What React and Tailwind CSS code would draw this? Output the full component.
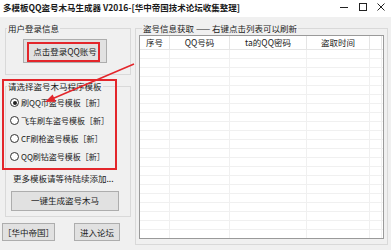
export default function App() {
  const rowLines = Array.from({ length: 21 });
  const cols = [30, 60, 77, 63, 12];
  return (
    <div className="w-[391px] h-[250px] bg-[#f0f0f0] overflow-hidden relative text-[#1a1a1a] font-['Noto_Sans_CJK_SC','Noto_Sans',sans-serif]">
      {/* title bar */}
      <div className="h-[17px] bg-white flex items-start">
        <div className="pl-[3px] pt-[2px] text-[8.5px] leading-[11px] font-bold whitespace-nowrap">
          多模板QQ盗号木马生成器 V2016-[华中帝国技术论坛收集整理]
        </div>
        <div className="ml-auto flex items-start pt-[3px]">
          <div className="w-[8px] h-[8px] flex items-center mr-[11px]"><div className="w-[8px] h-px bg-[#222]" /></div>
          <div className="w-[8px] h-[8px] border border-[#222] mr-[10px]" />
          <svg width="8" height="8" viewBox="0 0 8 8" className="mr-[6px]"><path d="M0.5 0.5L7.5 7.5M7.5 0.5L0.5 7.5" stroke="#222" strokeWidth="1" /></svg>
        </div>
      </div>

      <div className="flex">
        {/* left column */}
        <div className="w-[135px] flex flex-col">
          <fieldset className="ml-[5px] mt-[6px] w-[126px] h-[52px] border border-[#d9d9d9] flex justify-center">
            <legend className="ml-[1px] px-[1px] text-[8.5px] leading-[10px]">用户登录信息</legend>
            <button className="mt-[6px] ml-[-6px] w-[84px] h-[24px] bg-[#e1e1e1] border border-[#adadad] text-[8.5px] leading-none">点击登录QQ账号</button>
          </fieldset>
          <fieldset className="ml-[5px] mt-[6px] w-[126px] h-[136px] border border-[#d9d9d9] flex flex-col">
            <legend className="ml-[1px] px-[1px] text-[8.5px] leading-[10px]">请选择盗号木马程序模板</legend>
            <div className="flex flex-col pl-[4px] pt-[7px] gap-[9px]">
              {[
                ["刷QQ币盗号模板［新］", true],
                ["飞车刷车盗号模板［新］", false],
                ["CF刷枪盗号模板［新］", false],
                ["QQ刷钻盗号模板［新］", false],
              ].map(([t, c]) => (
                <div key={t} className="flex items-center h-[9px] gap-[2px] whitespace-nowrap">
                  <div className="w-[9px] h-[9px] rounded-full border border-[#333] bg-white flex items-center justify-center">
                    {c && <div className="w-[4px] h-[4px] rounded-full bg-[#222]" />}
                  </div>
                  <span className="text-[8px] leading-none">{t}</span>
                </div>
              ))}
            </div>
            <div className="pl-[7px] pt-[13px] text-[8.5px] leading-none whitespace-nowrap">更多模板请等待陆续添加...</div>
            <button className="mt-[8px] ml-[5px] w-[108px] h-[20px] bg-[#e1e1e1] border border-[#adadad] text-[8.5px] leading-none">一键生成盗号木马</button>
          </fieldset>
          <div className="flex mt-[6px] ml-[2px] gap-[19px]">
            <button className="w-[53px] h-[18px] bg-[#e1e1e1] border border-[#adadad] text-[8.5px] leading-none">［华中帝国］</button>
            <button className="w-[46px] h-[18px] bg-[#e1e1e1] border border-[#adadad] text-[8.5px] leading-none">进入论坛</button>
          </div>
        </div>

        {/* right group */}
        <fieldset className="mt-[6px] w-[253px] h-[222px] border border-[#d9d9d9] flex flex-col">
          <legend className="ml-[6px] px-[1px] text-[8.5px] leading-[10px] whitespace-nowrap">盗号信息获取 —— 右键点击列表可以刷新</legend>
          <div className="mt-[2px] ml-[3px] w-[245px] h-[204px] bg-white border border-[#9a9a9a] overflow-hidden">
            <div className="flex h-[14px] border-b border-[#e5e5e5]">
              {["序号", "QQ号码", "ta的QQ密码", "盗取时间", ""].map((h, i) => (
                <div key={i} style={{ width: cols[i] }} className="border-r border-[#e5e5e5] flex items-center justify-center text-[8.5px] leading-none whitespace-nowrap">{h}</div>
              ))}
            </div>
            {rowLines.map((_, r) => (
              <div key={r} className="flex h-[9px] border-b border-[#f0f0f0]">
                {cols.map((w, i) => (
                  <div key={i} style={{ width: w }} className="border-r border-[#f0f0f0]" />
                ))}
              </div>
            ))}
          </div>
        </fieldset>
      </div>

      {/* red annotations */}
      <div className="absolute left-[27px] top-[42px] w-[73px] h-[20px] border-2 border-[#e3262b]" />
      <div className="absolute left-[2px] top-[79px] w-[115px] h-[91px] border-2 border-[#e3262b]" />
      <svg className="absolute left-0 top-0" width="391" height="250">
        <line x1="134" y1="64" x2="53" y2="98.5" stroke="#e3262b" strokeWidth="1.5" />
        <polygon points="45,102 56,101.7 52.6,94.4" fill="#e3262b" />
      </svg>
    </div>
  );
}
